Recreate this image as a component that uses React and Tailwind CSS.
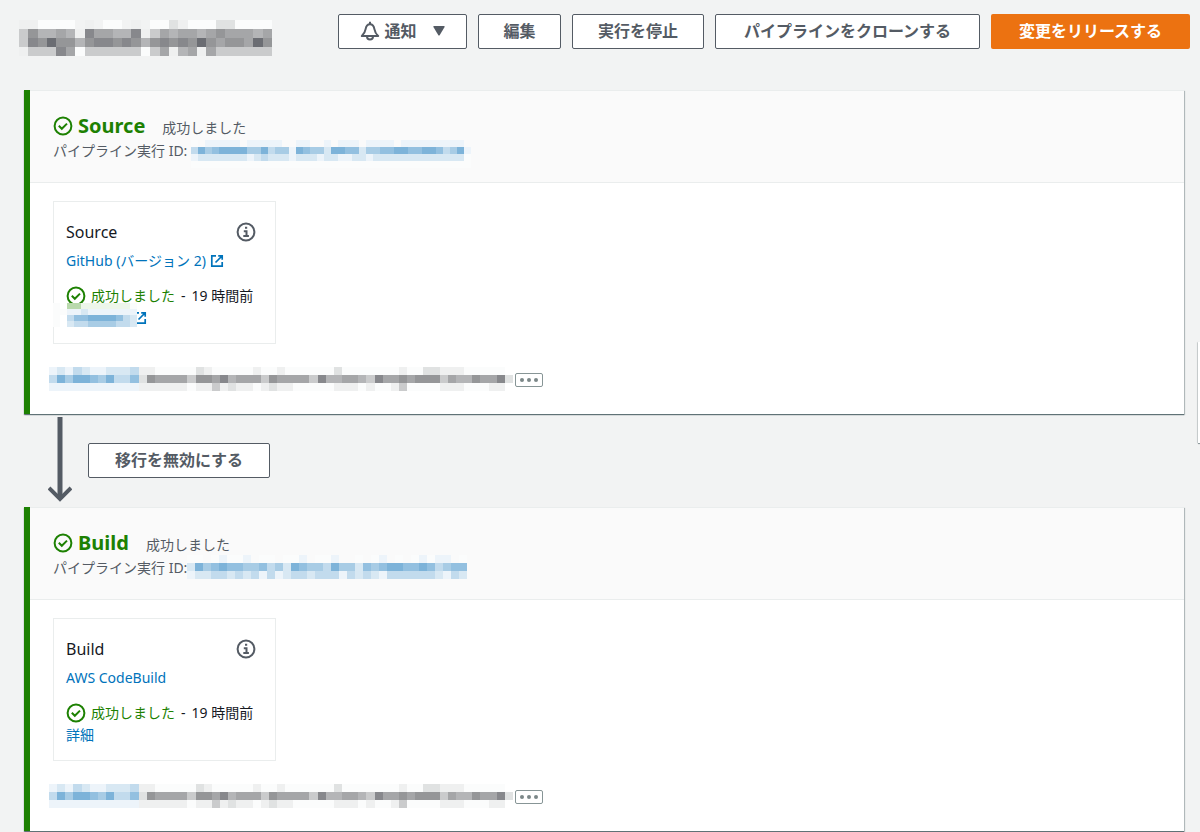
import React from 'react';

// Cell colours of the redacted areas, from light to dark
const CELL_COLORS = {
  '0': '#fbfcfc',
  '1': '#eff0f0',
  '2': '#e0e2e2',
  '3': '#cacbcc',
  '4': '#b4b5b7',
  '5': '#a5a6a8',
  '6': '#959698',
  '7': '#87888c',
  '8': '#6b6d73',
  a: '#edf4fa',
  b: '#d8e8f3',
  c: '#c2dbed',
  d: '#a8cce5',
  e: '#93c0e0',
  f: '#7db3d9',
  g: '#b9d9ad',
  h: '#edf6ea',
};

const TITLE_CELLS = [
  '110000.1.00.1.0021000220000',
  '364454175544713545545655545',
  '376866467767646767686566586',
  '133375033333303514515333333',
];

const SOURCE_ID_CELLS = [
  '0.aaaaa.aaaaa..aa..a.aaa.aaaa.aaaaaaaaa.',
  'cfdeffffddfcddafeddbffeebddeeffeeffecdfa',
  'abbbbbbbabcbbbabbbabbaabbabbbbbbbbbbbbb0',
  '0000000000000000000000000000000000000000',
];

const BUILD_ID_CELLS = [
  '00.0a00a.00.00a.00a..0.0a.0.0a0aa.0',
  'bfdefeeddecdbfeddcfddbedeffeefecdee',
  'abbccbcbcacabccbcccacbcbaccccccbacb',
];

const COMMIT_CELLS = [
  'abacbaabbbc110000021000001001000000200000001002211100000',
  'cfdffedfcce265555366574555365555374455437556566635446557' + '2',
  'aaaaaaaaaaa111111011312110121100000111010013000011100011',
];

const REVISION_CELLS = [
  '0.gghhhhhhh0',
  '00aabaaaaaaa',
  '0.ceeffffecb',
  '0.bccddddccb',
];

const Mosaic = ({ rows, className }) => (
  <svg
    className={className}
    viewBox={`0 0 ${rows[1].length} ${rows.length}`}
    preserveAspectRatio="none"
    shapeRendering="crispEdges"
    aria-hidden="true"
  >
    {rows.map((row, y) =>
      [...row].map((cell, x) =>
        cell === '.' ? null : (
          <rect key={`${x}-${y}`} x={x} y={y} width="1" height="1" fill={CELL_COLORS[cell]} />
        )
      )
    )}
  </svg>
);

const CheckIcon = () => (
  <svg className="w-5 h-5 shrink-0" viewBox="0 0 20 20" fill="none" stroke="currentColor" strokeWidth="2">
    <circle cx="10" cy="10" r="8.4" />
    <path d="M5.8 9.8l3 3 5.2-5.2" />
  </svg>
);

const InfoIcon = () => (
  <svg className="w-5 h-5" viewBox="0 0 20 20" fill="none" stroke="currentColor" strokeWidth="2">
    <circle cx="10" cy="10" r="8.4" />
    <path d="M9 5.8h2.2M7.8 9.2h2.7v4.6M7.3 14h5.6" />
  </svg>
);

const ExternalIcon = () => (
  <svg className="w-[14px] h-[14px]" viewBox="0 0 14 14" fill="none" stroke="currentColor" strokeWidth="1.7">
    <path d="M6 1.8H1.800v10.400h10.400V8M8.200 1.800h4v4M12 2L5.500 8.500" />
  </svg>
);

const BellIcon = () => (
  <svg className="w-5 h-5 shrink-0" viewBox="0 0 20 20" fill="none" stroke="currentColor" strokeWidth="2" strokeLinejoin="round">
    <path d="M10 .8v2.200" />
    <path d="M1.800 15h16.400C15.300 12.600 14.800 10.500 14.400 8.200 13.900 5 12.600 3.200 10 3.200S6.100 5 5.600 8.200C5.200 10.500 4.700 12.600 1.800 15z" />
    <path d="M7 15.500a3 3 0 0 0 6 0" />
  </svg>
);

const Button = ({ children, className = '' }) => (
  <button
    type="button"
    className={`h-[35px] pb-[2px] flex items-center justify-center rounded-xs border border-[#545b64] bg-white text-base font-bold text-[#545b64] whitespace-nowrap ${className}`}
  >
    {children}
  </button>
);

const Stage = ({ name, idCells, idClass, provider, external, children }) => (
  <section className="border-l-6 border-[#1d8102] bg-white shadow-[0_1px_1px_0_rgba(0,28,36,0.5),1px_1px_1px_0_rgba(0,28,36,0.2)]">
    <header className="h-[93px] border-y border-[#eaeded] bg-[#fafafa] pl-[23px] pt-[23px]">
      <div className="flex items-center h-6 text-[#1d8102]">
        <CheckIcon />
        <h2 className="ml-[5px] text-xl leading-6 font-bold">{name}</h2>
        <span className="ml-[17px] pt-[3px] text-sm text-[#545b64]">成功しました</span>
      </div>
      <div className="flex h-[30px] text-sm leading-[26px] text-[#545b64]">
        <span className="whitespace-nowrap">パイプライン実行 ID:</span>
        <a href="#execution" aria-label={`${name} execution`}>
          <Mosaic rows={idCells} className={idClass} />
        </a>
      </div>
    </header>
    <div className="px-[23px] pt-[18px] pb-[23px]">
      <article className="relative w-[223px] h-[143px] border border-[#eaeded] px-3 pt-[19px] text-sm text-[#16191f]">
        <div className="flex items-center justify-between h-[22px] pr-[7px]">
          <h3 className="text-base">{name}</h3>
          <button type="button" aria-label="Info" className="text-[#545b64]">
            <InfoIcon />
          </button>
        </div>
        <a href="#provider" className="mt-[7px] flex items-center gap-1 h-[22px] text-[#0073bb]">
          {provider}
          {external && <ExternalIcon />}
        </a>
        <div className="mt-[13px] flex items-center h-[22px] whitespace-nowrap">
          <span className="text-[#1d8102]"><CheckIcon /></span>
          <span className="ml-[5px] text-[#1d8102]">成功しました</span>
          <span className="ml-[6px]">-</span>
          <span className="ml-[6px]">19 時間前</span>
        </div>
        {children}
      </article>
      <div className="mt-[23px] -ml-1 flex items-center">
        <Mosaic rows={COMMIT_CELLS} className="w-[464px] h-6" />
        <button
          type="button"
          aria-label="More"
          className="ml-[2px] mt-px w-7 h-[14px] flex items-center justify-center gap-[3px] rounded-xs border border-[#879596]"
        >
          <span className="w-1 h-1 rounded-full bg-[#7b8788]" />
          <span className="w-1 h-1 rounded-full bg-[#7b8788]" />
          <span className="w-1 h-1 rounded-full bg-[#7b8788]" />
        </button>
      </div>
    </div>
  </section>
);

const App = () => (
  <div className="relative min-h-screen overflow-hidden bg-[#f2f3f3] font-['Noto_Sans','Noto_Sans_CJK_JP',sans-serif]">
    <div className="flex items-start justify-between pt-[14px] pl-[19px] pr-[10px]">
      <h1 aria-label="Pipeline">
        <Mosaic rows={TITLE_CELLS} className="mt-[6px] w-[253px] h-9" />
      </h1>
      <div className="flex gap-[11px]">
        <Button className="w-[129px]">
          <BellIcon />
          <span className="ml-1">通知</span>
          <svg className="ml-4 w-3 h-[10px]" viewBox="0 0 12 10" fill="currentColor">
            <path d="M1 0h10q1 0 .6 1L6.800 9q-.8 1-1.600 0L.4 1Q0 0 1 0z" />
          </svg>
        </Button>
        <Button className="w-[83px]">編集</Button>
        <Button className="w-[132px]">実行を停止</Button>
        <Button className="w-[265px]">パイプラインをクローンする</Button>
        <button
          type="button"
          className="w-[199px] h-[35px] pb-[2px] rounded-xs bg-[#ec7211] text-base font-bold text-white whitespace-nowrap"
        >
          変更をリリースする
        </button>
      </div>
    </div>

    <main className="mt-[34px] ml-6 mr-4">
      <Stage
        name="Source"
        idCells={SOURCE_ID_CELLS}
        idClass="ml-1 mt-[2px] w-[280px] h-7"
        provider="GitHub (バージョン 2)"
        external
      >
        <a href="#revision" aria-label="Revision" className="flex h-[22px] items-center pl-[67px] text-[#0073bb]">
          <ExternalIcon />
        </a>
        <Mosaic rows={REVISION_CELLS} className="absolute -left-px top-[101px] w-[84px] h-6" />
      </Stage>

      <div className="flex items-start h-[93px] pt-[3px] pl-6">
        <svg className="w-6 h-[86px] text-[#545b64]" viewBox="0 0 24 86" fill="none" stroke="currentColor">
          <path d="M12 0v82" strokeWidth="5" />
          <path d="M1 71l11 11 11-11" strokeWidth="4" />
        </svg>
        <Button className="mt-[26px] ml-4 w-[182px]">移行を無効にする</Button>
      </div>

      <Stage
        name="Build"
        idCells={BUILD_ID_CELLS}
        idClass="w-[280px] h-6"
        provider="AWS CodeBuild"
      >
        <a href="#details" className="flex h-[22px] items-center text-[#0073bb]">詳細</a>
      </Stage>
    </main>

    <aside className="absolute right-0 top-[342px] w-[2px] h-[101px] bg-white shadow-[0_1px_1px_0_rgba(0,28,36,0.5),-1px_0_1px_0_rgba(0,28,36,0.15)]" />
  </div>
);

export default App;
